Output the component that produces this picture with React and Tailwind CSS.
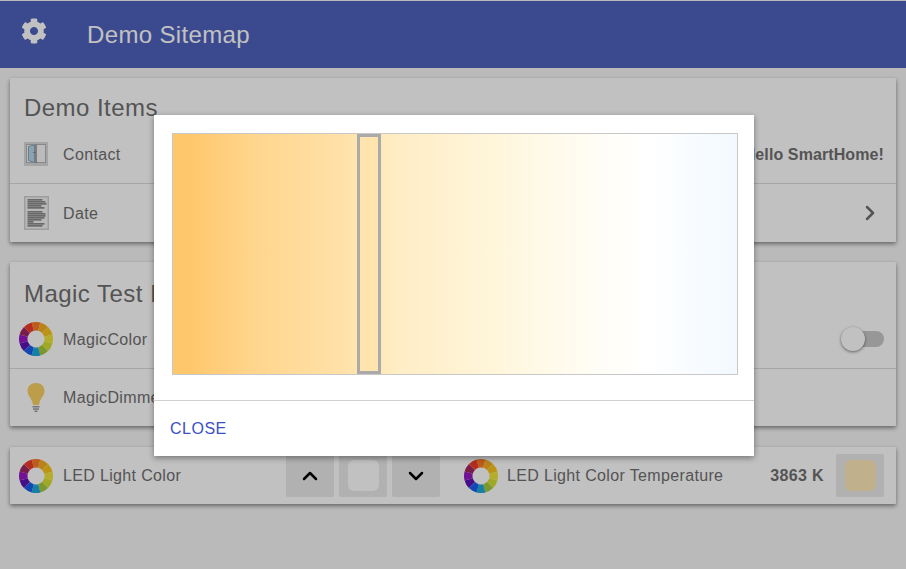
import React from "react";
import { ChevronRight, ChevronUp, ChevronDown } from "lucide-react";
import { FaCog } from "react-icons/fa";

const WHEEL_COLORS = ["#fb7a26", "#f5ae22", "#f8c41c", "#f0e43a", "#d4de36", "#a4c83a", "#1ca8dc", "#1860ee", "#5a14b4", "#9618c4", "#a02862", "#ee3c28"];

function ColorWheel() {
  const seg = (i) => {
    const a0 = ((i * 30 - 15 - 90) * Math.PI) / 180;
    const a1 = ((i * 30 + 15 - 90) * Math.PI) / 180;
    const p = (r, a) => `${(17 + r * Math.cos(a)).toFixed(2)} ${(17 + r * Math.sin(a)).toFixed(2)}`;
    return `M${p(17, a0)} A17 17 0 0 1 ${p(17, a1)} L${p(8.5, a1)} A8.5 8.5 0 0 0 ${p(8.5, a0)} Z`;
  };
  return (
    <svg width="34" height="34" viewBox="0 0 34 34">
      {WHEEL_COLORS.map((c, i) => (
        <path key={i} d={seg(i)} fill={c} />
      ))}
    </svg>
  );
}

function DoorIcon() {
  return (
    <svg width="24" height="24" viewBox="0 0 24 24">
      <rect width="24" height="24" fill="#dadada" />
      <rect x="2.5" y="2.5" width="19" height="18" fill="#f8f8f8" stroke="#b4b4b4" />
      <path d="M4.5 4.5 L10.5 3 V20.5 L4.5 18.5 Z" fill="#b8d6ea" stroke="#8aa6b8" />
      <path d="M12 2.5 V21" stroke="#8a8a8a" strokeWidth="1.5" />
      <path d="M9 10.5 H12" stroke="#8a8a8a" />
    </svg>
  );
}

function DocIcon() {
  const lines = [
    [3, 15], [5, 18], [7, 19], [9, 14], [11, 17],
    [15, 15], [17, 18], [19, 18], [21, 17], [23, 14], [25, 6], [27, 17], [29, 15],
  ];
  return (
    <svg width="25" height="34" viewBox="0 0 25 34">
      <rect x="0.75" y="0.75" width="23.5" height="32.5" fill="#f4f4f4" stroke="#d0d0d0" strokeWidth="1.5" />
      {lines.map(([y, w]) => (
        <rect key={y} x="3.5" y={y} width={w} height="1.7" fill="#8c8c8c" />
      ))}
    </svg>
  );
}

function BulbIcon() {
  return (
    <svg width="18" height="29" viewBox="0 0 18 29">
      <path d="M9 0 C4 0 0.5 3 0.5 8 C0.5 13 5 15 6 22 H12 C13 15 17.5 13 17.5 8 C17.5 3 14 0 9 0 Z" fill="#f8d062" />
      <rect x="5.5" y="23" width="7" height="1.5" fill="#9a9a9a" />
      <rect x="6" y="25.3" width="6" height="1.5" fill="#9a9a9a" />
      <rect x="7.5" y="27.5" width="3" height="1.5" fill="#9a9a9a" />
    </svg>
  );
}

function Row({ icon, label, right, border, short }) {
  return (
    <div
      className={`flex items-center pl-[9px] pr-3 ${short ? "h-[57px]" : border ? "h-[59px] border-b border-[#dcdcdc]" : "h-[58px]"}`}
    >
      <div className="flex w-[34px] justify-center">{icon}</div>
      <span className={`ml-[10px] tracking-[0.35px] text-[#707070] ${short ? "" : "pt-[2px]"}`}>{label}</span>
      <div className="ml-auto">{right}</div>
    </div>
  );
}

function Card({ title, titleClass, children }) {
  return (
    <section className="rounded-[1px] bg-white shadow-[0_2px_4px_rgba(0,0,0,0.45)]">
      <h2 className={`pl-[14px] text-2xl leading-7 tracking-[0.45px] text-[#707070] ${titleClass}`}>{title}</h2>
      {children}
    </section>
  );
}

export default function App() {
  return (
    <div className="relative h-[569px] overflow-hidden bg-[#f6f6f6] font-['Liberation_Sans',Arial,sans-serif]">
      <header className="mt-px flex h-[67px] items-center bg-[#4e62bd] pl-[21px] text-white">
        <FaCog className="mb-[7px] text-[26px]" />
        <h1 className="ml-[40px] text-2xl tracking-[0.35px]">Demo Sitemap</h1>
      </header>

      <main className="flex flex-col px-[10px] pt-[10px]">
        <Card title="Demo Items" titleClass="h-[47px] pt-[16px]">
          <Row
            border
            icon={<DoorIcon />}
            label="Contact"
            right={<b className="block pt-[2px] tracking-[0.1px] text-[#707070]">Hello SmartHome!</b>}
          />
          <Row
            icon={<DocIcon />}
            label="Date"
            right={<ChevronRight className="mr-[2px] text-[#707070]" size={24} strokeWidth={2.5} />}
          />
        </Card>

        <div className="mt-[20px]">
          <Card title="Magic Test Items" titleClass="h-[48px] pt-[18px]">
            <Row
              border
              icon={<ColorWheel />}
              label="MagicColor"
              right={
                <div className="relative h-4 w-[43px] rounded-full bg-[#c8c8c8]">
                  <span className="absolute left-0 top-[-4px] size-6 rounded-full bg-white shadow-[0_1px_3px_rgba(0,0,0,0.5)]" />
                </div>
              }
            />
            <Row short icon={<BulbIcon />} label="MagicDimmer" />
          </Card>
        </div>

        <section className="mt-[21px] flex h-[57px] items-center rounded-[1px] bg-white pl-[9px] pr-3 shadow-[0_2px_4px_rgba(0,0,0,0.45)]">
          <div className="flex w-[445px] items-center">
            <ColorWheel />
            <span className="ml-[10px] tracking-[0.35px] text-[#707070]">LED Light Color</span>
            <div className="ml-auto mr-[24px] flex gap-[5px]">
              <button className="flex h-[43px] w-12 items-center justify-center rounded-[2px] bg-[#eaeaea] text-black">
                <ChevronUp size={24} strokeWidth={2.5} />
              </button>
              <button className="flex h-[43px] w-12 items-center justify-center rounded-[2px] bg-[#eaeaea]">
                <span className="size-[31px] rounded-md bg-white" />
              </button>
              <button className="flex h-[43px] w-12 items-center justify-center rounded-[2px] bg-[#eaeaea] text-black">
                <ChevronDown size={24} strokeWidth={2.5} />
              </button>
            </div>
          </div>
          <ColorWheel />
          <span className="ml-[9px] tracking-[0.35px] text-[#707070]">LED Light Color Temperature</span>
          <b className="ml-auto mr-3 tracking-[0.35px] text-[#707070]">3863 K</b>
          <div className="flex h-[43px] w-12 items-center justify-center rounded-[2px] bg-[#eaeaea]">
            <span className="size-[31px] rounded-md bg-[#fee9ba]" />
          </div>
        </section>
      </main>

      <div className="absolute inset-0 flex items-center justify-center bg-[rgba(0,0,0,0.243)] pl-[2px] pt-[2px]">
        <div className="w-[600px] bg-white shadow-[0_2px_6px_rgba(0,0,0,0.4)]">
          <div className="pb-[25px] pl-[18px] pr-[16px] pt-[18px]">
            <div className="flex h-[242px] border border-[#c8c8c8] bg-[linear-gradient(to_right,#ffc76c_3%,#ffd58c_14%,#ffe1a8_30%,#ffedc5_40%,#fff6dc_58%,#fffdf5_75%,#ffffff_84%,#f2f9ff_100%)] pl-[184px]">
              <div className="h-full w-6 border-[3px] border-[#aaaaaa] bg-[#ffe4ae]" />
            </div>
          </div>
          <div className="flex h-[56px] items-center border-t border-[#d0d0d0] pl-4 tracking-[0.5px] text-[#3b50c4]">CLOSE</div>
        </div>
      </div>
    </div>
  );
}
